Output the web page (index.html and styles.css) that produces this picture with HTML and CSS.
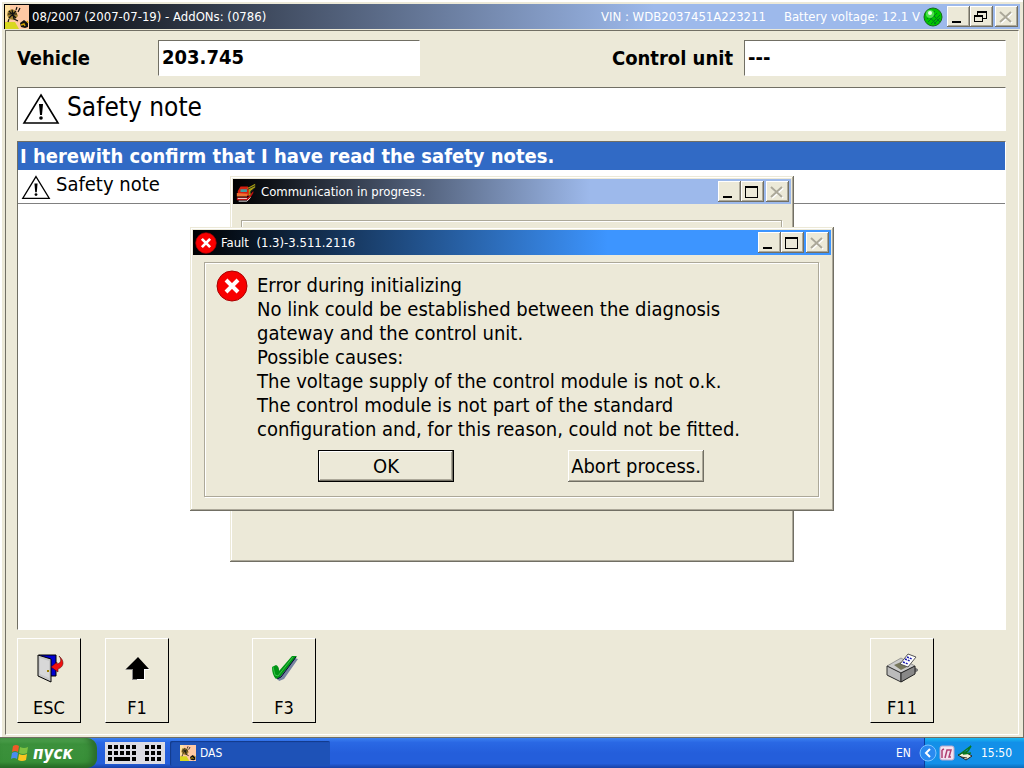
FILE: index.html
```html
<!DOCTYPE html>
<html lang="en">
<head>
    <meta charset="UTF-8">
    <meta name="viewport" content="width=device-width, initial-scale=1.0">
    <title>DAS</title>
    <link rel="stylesheet" href="styles.css">
</head>
<body>

    <!-- shared icons -->
    <svg class="hidden">
        <symbol id="icon-min" viewBox="0 0 20 20"><path d="M5 14h9v2H5z" fill="#000"/></symbol>
        <symbol id="icon-max" viewBox="0 0 20 20"><path d="M4 4h13v12H4zM5 6v9h11V6z" fill="#000" fill-rule="evenodd"/></symbol>
        <symbol id="icon-restore" viewBox="0 0 20 20"><path d="M7 4h10v8h-4v-1h3V6H8v2H7zM4 8h9v7H4zM5 10v4h7v-4z" fill="#000" fill-rule="evenodd"/></symbol>
        <symbol id="icon-close" viewBox="0 0 20 20"><path d="M6 6l11 10M17 6L6 16" stroke="#fff" stroke-width="2"/><path d="M5 5l11 10M16 5L5 15" stroke="#aca899" stroke-width="2"/></symbol>
        <symbol id="icon-warn" viewBox="0 0 38 32"><path d="M19 2L36 30H2z" fill="#fff" stroke="#000" stroke-width="1.6"/><path d="M17 11h4l-1 11h-2z" fill="#000"/><circle cx="19" cy="25" r="1.8" fill="#000"/></symbol>
        <symbol id="icon-error" viewBox="0 0 32 32"><circle cx="16" cy="16" r="15" fill="#f80000" stroke="#a00" stroke-width="1"/><path d="M10 10l12 12M22 10L10 22" stroke="#fff" stroke-width="4"/></symbol>
        <symbol id="icon-das" viewBox="0 0 24 24">
            <rect width="24" height="24" fill="#ffc9a4"/>
            <path d="M0 0h5v16H0z" fill="#ffe0a0"/><path d="M0 17h10l4 7H0z" fill="#d8d820"/>
            <path d="M3 6l4-2 4 2 2 5-4 4-5-1-2-4z" fill="#a08030"/>
            <path d="M3 9h9M7 5l2 9M4 6l7 7M11 6l-7 7M13 7l2-4M11 5l1-3M4 14l-1 3M9 14l4 2" stroke="#111" stroke-width="1.2" fill="none"/>
            <path d="M15 18l4-3 4 3v4l-3 1-4-1z" fill="#111"/><path d="M16 20l3-1 1 2M22 16l1 2" stroke="#d0a000" stroke-width="1.5" fill="none"/>
        </symbol>
    </svg>

    <main class="app">
        <header class="titlebar">
            <svg class="das-icon"><use href="#icon-das"/></svg>
            <h1>08/2007 (2007-07-19) - AddONs: (0786)</h1>
            <span class="vin">VIN : WDB2037451A223211</span>
            <span class="voltage">Battery voltage: 12.1 V</span>
            <svg class="led" viewBox="0 0 20 20"><circle cx="10" cy="10" r="9" fill="#00c400" stroke="#176b17"/><path d="M5 15l9-9M8 17l9-9M4 12l8-8M11 17l6-6M6 4l11 11M4 7l9 10" stroke="#007d20" stroke-width="1"/><circle cx="7" cy="7" r="4" fill="#4fe04f"/><circle cx="7" cy="6" r="2" fill="#e8ffe8"/></svg>
            <div class="win-buttons">
                <button type="button" aria-label="Minimize"><svg><use href="#icon-min"/></svg></button>
                <button type="button" aria-label="Restore"><svg><use href="#icon-restore"/></svg></button>
                <button type="button" aria-label="Close" class="close" disabled><svg><use href="#icon-close"/></svg></button>
            </div>
        </header>

        <div class="panel">
            <form class="vehicle-row">
                <label for="vehicle">Vehicle</label>
                <input type="text" id="vehicle" value="203.745" readonly>
                <label for="unit" class="unit-label">Control unit</label>
                <input type="text" id="unit" value="---" readonly>
            </form>

            <h2 class="note-title"><svg><use href="#icon-warn"/></svg>Safety note</h2>

            <ul class="note-list">
                <li class="selected">I herewith confirm that I have read the safety notes.</li>
                <li class="note"><svg><use href="#icon-warn"/></svg>Safety note</li>
            </ul>

            <div class="keys">
                <button type="button">
                    <svg viewBox="0 0 32 32"><path d="M6 3h17v21H6z" fill="#0000d0" stroke="#000"/><path d="M5 3l13 4v23L5 24z" fill="#c8c8c8" stroke="#000"/><path d="M7 6l9 3v17l-9-4z" fill="#d8d8d8"/><path d="M14 18h2v2h-2z" fill="#a08000"/><path d="M26 4c6 5 5 11-1 13v3l-7-5 6-5v2c4-1 5-4 2-8z" fill="#f01010" stroke="#400" stroke-width=".5"/></svg>
                    <span>ESC</span>
                </button>
                <button type="button">
                    <svg viewBox="0 0 32 32"><path d="M5 18L17 6l12 12h-5v10H12V18z" fill="#fff"/><path d="M4 18L16 7v21h-5V18z" fill="#888"/><path d="M5 17L17 5l11 12h-5v10H12V17z" fill="#000"/></svg>
                    <span>F1</span>
                </button>
                <button type="button" class="key-f3">
                    <svg viewBox="0 0 32 32"><path d="M6 17l4-2 2 6L26 6l4 1-14 20-5 2-4-6z" fill="#7783a0"/><path d="M4 15l4-2q3 1 3 6L24 4h5L12 25l-4 2q-4-4-4-12z" fill="#009414"/><path d="M5 15l2 8 3 1L25 5" fill="none" stroke="#36c44a"/><path d="M28 5L13 25l-4 2" fill="none" stroke="#003"/></svg>
                    <span>F3</span>
                </button>
                <button type="button" class="key-f11">
                    <svg viewBox="0 0 32 32"><path d="M1 14L17 7l13 9 3 2-17 12L2 24z" fill="#777"/><path d="M1 14l14-8 14 8-14 7z" fill="#ccc" stroke="#555" stroke-width=".5"/><path d="M1 14l14 7v9L1 23z" fill="#bbb" stroke="#333"/><path d="M15 21l14-7v8l-14 8z" fill="#888" stroke="#222"/><path d="M8 13l7-3 8 4-8 4z" fill="#77775c"/><path d="M14 12l8-10 8 3-8 10z" fill="#fff" stroke="#555"/><path d="M21 5l5 2M19 7l5 2M17 10l5 2" stroke="#1818b0" stroke-dasharray="2 1" stroke-width="1.5"/></svg>
                    <span>F11</span>
                </button>
            </div>
        </div>

        <div class="overlay">
            <section class="dialog progress">
                <header class="titlebar">
                    <svg class="dialog-icon" viewBox="0 0 24 24"><path d="M3 11l3-5h8l2 4v6H3z" fill="#d42010"/><path d="M6 9h7v3H6z" fill="#40a0a0"/><path d="M2 13l12 1-1 3H2z" fill="#f07030"/><path d="M2 18h12l6-7v2l-5 8H2z" fill="#c01010"/><path d="M3 19h10M4 22h9l4-4" stroke="#eee" fill="none"/><path d="M13 8l9-5v4l-5 4v4l-2 1V9z" fill="#a8a010"/><path d="M14 9l8-4M16 13l5-5" stroke="#222"/></svg>
                    <h2>Communication in progress.</h2>
                    <div class="win-buttons">
                        <button type="button" aria-label="Minimize"><svg><use href="#icon-min"/></svg></button>
                        <button type="button" aria-label="Maximize"><svg><use href="#icon-max"/></svg></button>
                        <button type="button" aria-label="Close" class="close" disabled><svg><use href="#icon-close"/></svg></button>
                    </div>
                </header>
                <div class="frame"></div>
            </section>

            <section class="dialog fault">
                <header class="titlebar">
                    <svg class="dialog-icon"><use href="#icon-error"/></svg>
                    <h2>Fault&nbsp; (1.3)-3.511.2116</h2>
                    <div class="win-buttons">
                        <button type="button" aria-label="Minimize"><svg><use href="#icon-min"/></svg></button>
                        <button type="button" aria-label="Maximize"><svg><use href="#icon-max"/></svg></button>
                        <button type="button" aria-label="Close" class="close" disabled><svg><use href="#icon-close"/></svg></button>
                    </div>
                </header>
                <div class="frame">
                    <div class="message">
                        <svg><use href="#icon-error"/></svg>
                        <p>Error during initializing<br>
                        No link could be established between the diagnosis<br>
                        gateway and the control unit.<br>
                        Possible causes:<br>
                        The voltage supply of the control module is not o.k.<br>
                        The control module is not part of the standard<br>
                        configuration and, for this reason, could not be fitted.</p>
                    </div>
                    <div class="actions">
                        <button type="button" class="default">OK</button>
                        <button type="button">Abort process.</button>
                    </div>
                </div>
            </section>
        </div>
    </main>

    <footer class="taskbar">
        <button type="button" class="start">
            <svg viewBox="0 0 20 20"><path d="M3 3q3-2 6 0L8 9q-3-2-6 0z" fill="#f05a28"/><path d="M10 4q4 2 8 0l-1 6q-4 2-8 0z" fill="#7ec242"/><path d="M2 10q3-2 6 0l-1 6q-3-2-6 0z" fill="#4a8cf0"/><path d="M9 11q4 2 8 0l-1 6q-4 2-8 0z" fill="#fbc520"/></svg>
            пуск
        </button>
        <svg class="keyboard" viewBox="0 0 60 22"><rect width="60" height="22" fill="#dcdce4"/><path d="M3 5h28M40 5h16M3 11h28M40 11h16M3 17h4M27 17h4M40 17h16" stroke="#000" stroke-width="4" stroke-dasharray="4 2"/><path d="M9 17h16" stroke="#000" stroke-width="4"/></svg>
        <button type="button" class="task"><svg><use href="#icon-das"/></svg>DAS</button>
        <span class="lang">EN</span>
        <div class="tray">
            <button type="button" class="expand" aria-label="Show hidden icons"><svg viewBox="0 0 18 18"><circle cx="9" cy="9" r="8" fill="#2a8af0" stroke="#7cc4ff"/><path d="M11 5L7 9l4 4" stroke="#fff" stroke-width="2" fill="none"/></svg></button>
            <svg viewBox="0 0 16 16"><rect x="1" y="1" width="14" height="14" rx="2" fill="#f4e4f0" stroke="#b8a8cc"/><path d="M3 13V5M6 13l2-8h4l-2 7h2M3 5l2-1" stroke="#b04070" stroke-width="1.5" fill="none"/></svg>
            <svg viewBox="0 0 16 16"><path d="M1 10l7-3 7 4-6 4z" fill="#f0f0d8" stroke="#222"/><path d="M2 10L14 1l-3 5-5 3 8-1" stroke="#0a7a20" stroke-width="1.5" fill="none"/><path d="M4 12l6 1" stroke="#333"/></svg>
            <time>15:50</time>
        </div>
    </footer>

</body>
</html>
```
FILE: styles.css
```css
* {
    box-sizing: border-box;
}
body {
    display: flex;
    flex-direction: column;
    min-height: 100vh;
    margin: 0;
    font-family: "DejaVu Sans Condensed", Tahoma, "Noto Sans", sans-serif;
    font-size: 20px;
    color: #000;
    background-color: #ece9d8;
}
h1, h2, p, ul {
    margin: 0;
    padding: 0;
    font-weight: normal;
}
button {
    font: inherit;
    color: inherit;
    padding: 0;
    border: none;
    background-color: #ece9d8;
}
svg {
    display: block;
    flex: none;
}
.hidden {
    position: absolute;
    width: 0;
    height: 0;
}

/* main window */
.app {
    position: relative;
    display: flex;
    flex-direction: column;
    flex: 1;
    padding: 4px 4px 3px;
    background-color: #ece9d8;
    box-shadow: inset -1px -1px #716f64, inset 2px 2px #fff;
}
.titlebar {
    display: flex;
    align-items: center;
    height: 25px;
    color: #fff;
    background: linear-gradient(to right, #000, #9db9eb 64%);
}
.titlebar h1, .titlebar h2 {
    flex: 1;
    font-size: 13px;
    line-height: 16px;
    white-space: nowrap;
}
.titlebar span {
    font-size: 13px;
    white-space: nowrap;
}
.das-icon {
    width: 24px;
    height: 24px;
    margin: 0 3px 0 1px;
}
.vin {
    margin-right: 18px;
}
.led {
    width: 20px;
    height: 20px;
    margin: 0 4px 0 3px;
}
.win-buttons {
    display: flex;
    margin-right: 2px;
}
.win-buttons button {
    width: 23px;
    height: 21px;
    box-shadow: inset -1px -1px #716f64, inset 1px 1px #fff, inset -2px -2px #aca899;
}
.win-buttons svg {
    width: 20px;
    height: 20px;
}
.win-buttons .close {
    margin-left: 2px;
}
.panel {
    display: flex;
    flex-direction: column;
    flex: 1;
    margin: 1px 1px 0;
    padding: 9px 12px 11px 11px;
    border: 1px solid;
    border-color: #716f64 #fff #fff #716f64;
}
.vehicle-row {
    display: flex;
    align-items: center;
    margin-bottom: 11px;
    font-weight: bold;
}
.vehicle-row label {
    width: 141px;
}
.vehicle-row .unit-label {
    width: auto;
    margin: 0 11px 0 auto;
}
.vehicle-row input {
    width: 262px;
    height: 36px;
    padding: 0 3px 2px;
    font: inherit;
}
.vehicle-row input, .note-title, .note-list {
    background-color: #fff;
    border: 1px solid;
    border-color: #716f64 #fff #fff #716f64;
}
.note-title {
    display: flex;
    align-items: center;
    gap: 7px;
    height: 44px;
    margin-bottom: 10px;
    padding: 0 4px 4px;
    font-size: 26px;
}
.note-title svg {
    width: 38px;
    height: 32px;
    margin-top: 4px;
}
.note-list {
    flex: 1;
    min-height: 300px;
    margin-bottom: 8px;
    list-style: none;
}
.note-list .selected {
    padding: 0 2px;
    font-weight: bold;
    line-height: 28px;
    color: #fff;
    background-color: #316ac5;
}
.note-list .note {
    display: flex;
    gap: 5px;
    height: 34px;
    padding: 2px 3px;
    line-height: 24px;
    border-bottom: 1px solid #808080;
}
.note svg {
    width: 30px;
    height: 25px;
    margin-top: 3px;
}
.keys {
    display: flex;
    gap: 24px;
    font-size: 18px;
}
.keys button {
    display: flex;
    flex-direction: column;
    align-items: center;
    justify-content: space-between;
    width: 64px;
    height: 85px;
    padding: 13px 0 4px;
    border: 1px solid;
    border-color: #fff #000 #000 #fff;
}
.keys svg {
    width: 32px;
    height: 32px;
}
.keys .key-f3 {
    margin-left: 59px;
}
.keys .key-f11 {
    margin: 0 72px 0 auto;
}

/* dialogs are stacked in the middle of the window */
.overlay {
    position: absolute;
    inset: 0;
    display: grid;
    place-items: center;
}
.dialog {
    display: flex;
    flex-direction: column;
    grid-area: 1 / 1;
    padding: 3px;
    background-color: #ece9d8;
    box-shadow: inset -1px -1px #716f64, inset 1px 1px #ece9d8, inset -2px -2px #aca899, inset 2px 2px #fff;
}
.dialog-icon {
    width: 24px;
    height: 22px;
    margin: 0 3px 0 1px;
}
.frame {
    border: 1px solid #aca899;
    box-shadow: 1px 1px #fff, inset 1px 1px #fff;
}
.progress {
    width: 564px;
    height: 386px;
}
.progress .frame {
    flex: 1;
    margin: 16px 9px 50px 8px;
}
.fault {
    width: 644px;
}
.fault .titlebar {
    background: linear-gradient(to right, #000, #3d95ff 65%);
}
.fault .frame {
    margin: 7px 12px 11px 11px;
    padding: 7px 12px 14px 11px;
}
.message {
    display: flex;
    gap: 9px;
}
.message svg {
    width: 32px;
    height: 32px;
}
.message p {
    padding-top: 3px;
    line-height: 24px;
    white-space: nowrap;
}
.actions {
    display: flex;
    justify-content: space-between;
    padding: 9px 102px 0;
}
.actions button {
    width: 136px;
    height: 32px;
    white-space: nowrap;
    box-shadow: inset -1px -1px #716f64, inset 1px 1px #fff, inset -2px -2px #aca899;
}
.actions .default {
    border: 1px solid #000;
}

/* taskbar */
.taskbar {
    display: flex;
    align-items: center;
    height: 30px;
    font-size: 12px;
    color: #fff;
    background: linear-gradient(#3b80f0, #2a68e4 15%, #245edb 50%, #245edb 85%, #1941a5);
}
.start {
    display: flex;
    align-items: center;
    gap: 3px;
    width: 97px;
    height: 30px;
    padding: 0 10px;
    font-size: 17px;
    font-weight: bold;
    font-style: italic;
    border-radius: 0 10px 10px 0;
    background: linear-gradient(#5cb35c, #3c913c 20%, #388f38 80%, #236b23);
    box-shadow: inset -5px 0 6px #2a6c2a;
}
.start svg {
    width: 20px;
    height: 20px;
}
.keyboard {
    width: 60px;
    height: 22px;
    margin: 0 5px 0 8px;
}
.task {
    display: flex;
    align-items: center;
    gap: 4px;
    width: 160px;
    height: 25px;
    padding: 0 10px;
    border-radius: 2px;
    background-color: #1e52b7;
    box-shadow: inset 1px 1px 1px #123a8a;
}
.task svg {
    width: 16px;
    height: 16px;
}
.lang {
    margin-left: auto;
}
.tray {
    display: flex;
    align-items: center;
    gap: 2px;
    height: 30px;
    margin-left: 13px;
    padding-right: 12px;
    border-left: 1px solid #0b3c9a;
    background: linear-gradient(#19b9f3, #1290e8 15%, #1290e8 85%, #0d6bb8);
}
.tray svg {
    width: 16px;
    height: 16px;
}
.tray .expand {
    margin-left: -6px;
    background: none;
}
.tray .expand svg {
    width: 18px;
    height: 18px;
}
.tray time {
    margin-left: 6px;
}
```
